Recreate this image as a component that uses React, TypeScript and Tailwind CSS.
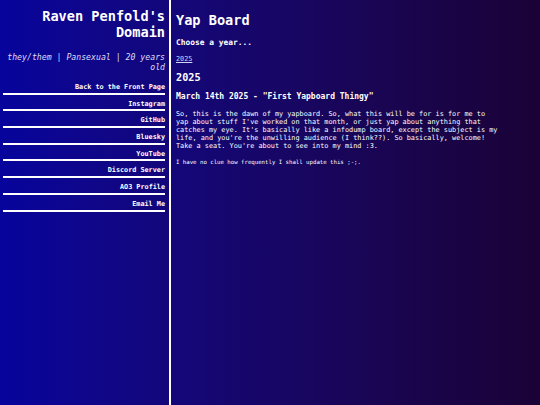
const links = [
  'Back to the Front Page',
  'Instagram',
  'GitHub',
  'Bluesky',
  'YouTube',
  'Discord Server',
  'AO3 Profile',
  'Email Me',
]

export default function App() {
  return (
    <div
      className="flex min-h-screen w-full bg-gradient-to-r from-[#06049c] to-[#1a0236] text-white"
      style={{ fontFamily: '"DejaVu Sans Mono", monospace' }}
    >
      <aside className="w-[171px] shrink-0 border-r-2 border-white pr-[4px] text-right">
        <h1 className="pt-[8px] text-[13.6px] font-bold leading-[16px]">Raven Penfold's Domain</h1>
        <p className="mt-[13px] text-[8.2px] italic leading-[9.5px] text-[#dcdcf6]">
          they/them | Pansexual | 20 years old
        </p>
        <nav className="ml-[3px] mt-[6px] flex flex-col">
          {links.map(link => (
            <a
              key={link}
              href="#"
              className="block border-b-2 border-white pb-[1.7px] pt-[5px] text-[6.8px] font-bold leading-[8px] text-white"
            >
              {link}
            </a>
          ))}
        </nav>
      </aside>
      <main className="flex-1 pl-[5px]">
        <div className="max-w-[323px]">
          <h1 className="pt-[12px] text-[13.6px] font-bold leading-[16px]">Yap Board</h1>
          <h3 className="mt-[10px] text-[7.9px] font-bold leading-[10px]">Choose a year...</h3>
          <a href="#" className="mt-[7px] block text-[6.8px] leading-[8px] text-[#d4d4f6] underline">
            2025
          </a>
          <h2 className="mt-[9px] text-[10.2px] font-bold leading-[12px]">2025</h2>
          <h4 className="mt-[8px] text-[8px] font-bold leading-[10px]">
            March 14th 2025 - "First Yapboard Thingy"
          </h4>
          <p className="mt-[9px] text-[6.85px] leading-[7.9px] text-white">
            So, this is the dawn of my yapboard. So, what this will be for is for me to yap about stuff I've worked
            on that month, or just yap about anything that catches my eye. It's basically like a infodump board,
            except the subject is my life, and you're the unwilling audience (I think??). So basically, welcome! Take
            a seat. You're about to see into my mind :3.
          </p>
          <p className="mt-[8px] text-[5.7px] leading-[7px] text-white">
            I have no clue how frequently I shall update this ;-;.
          </p>
        </div>
      </main>
    </div>
  )
}
